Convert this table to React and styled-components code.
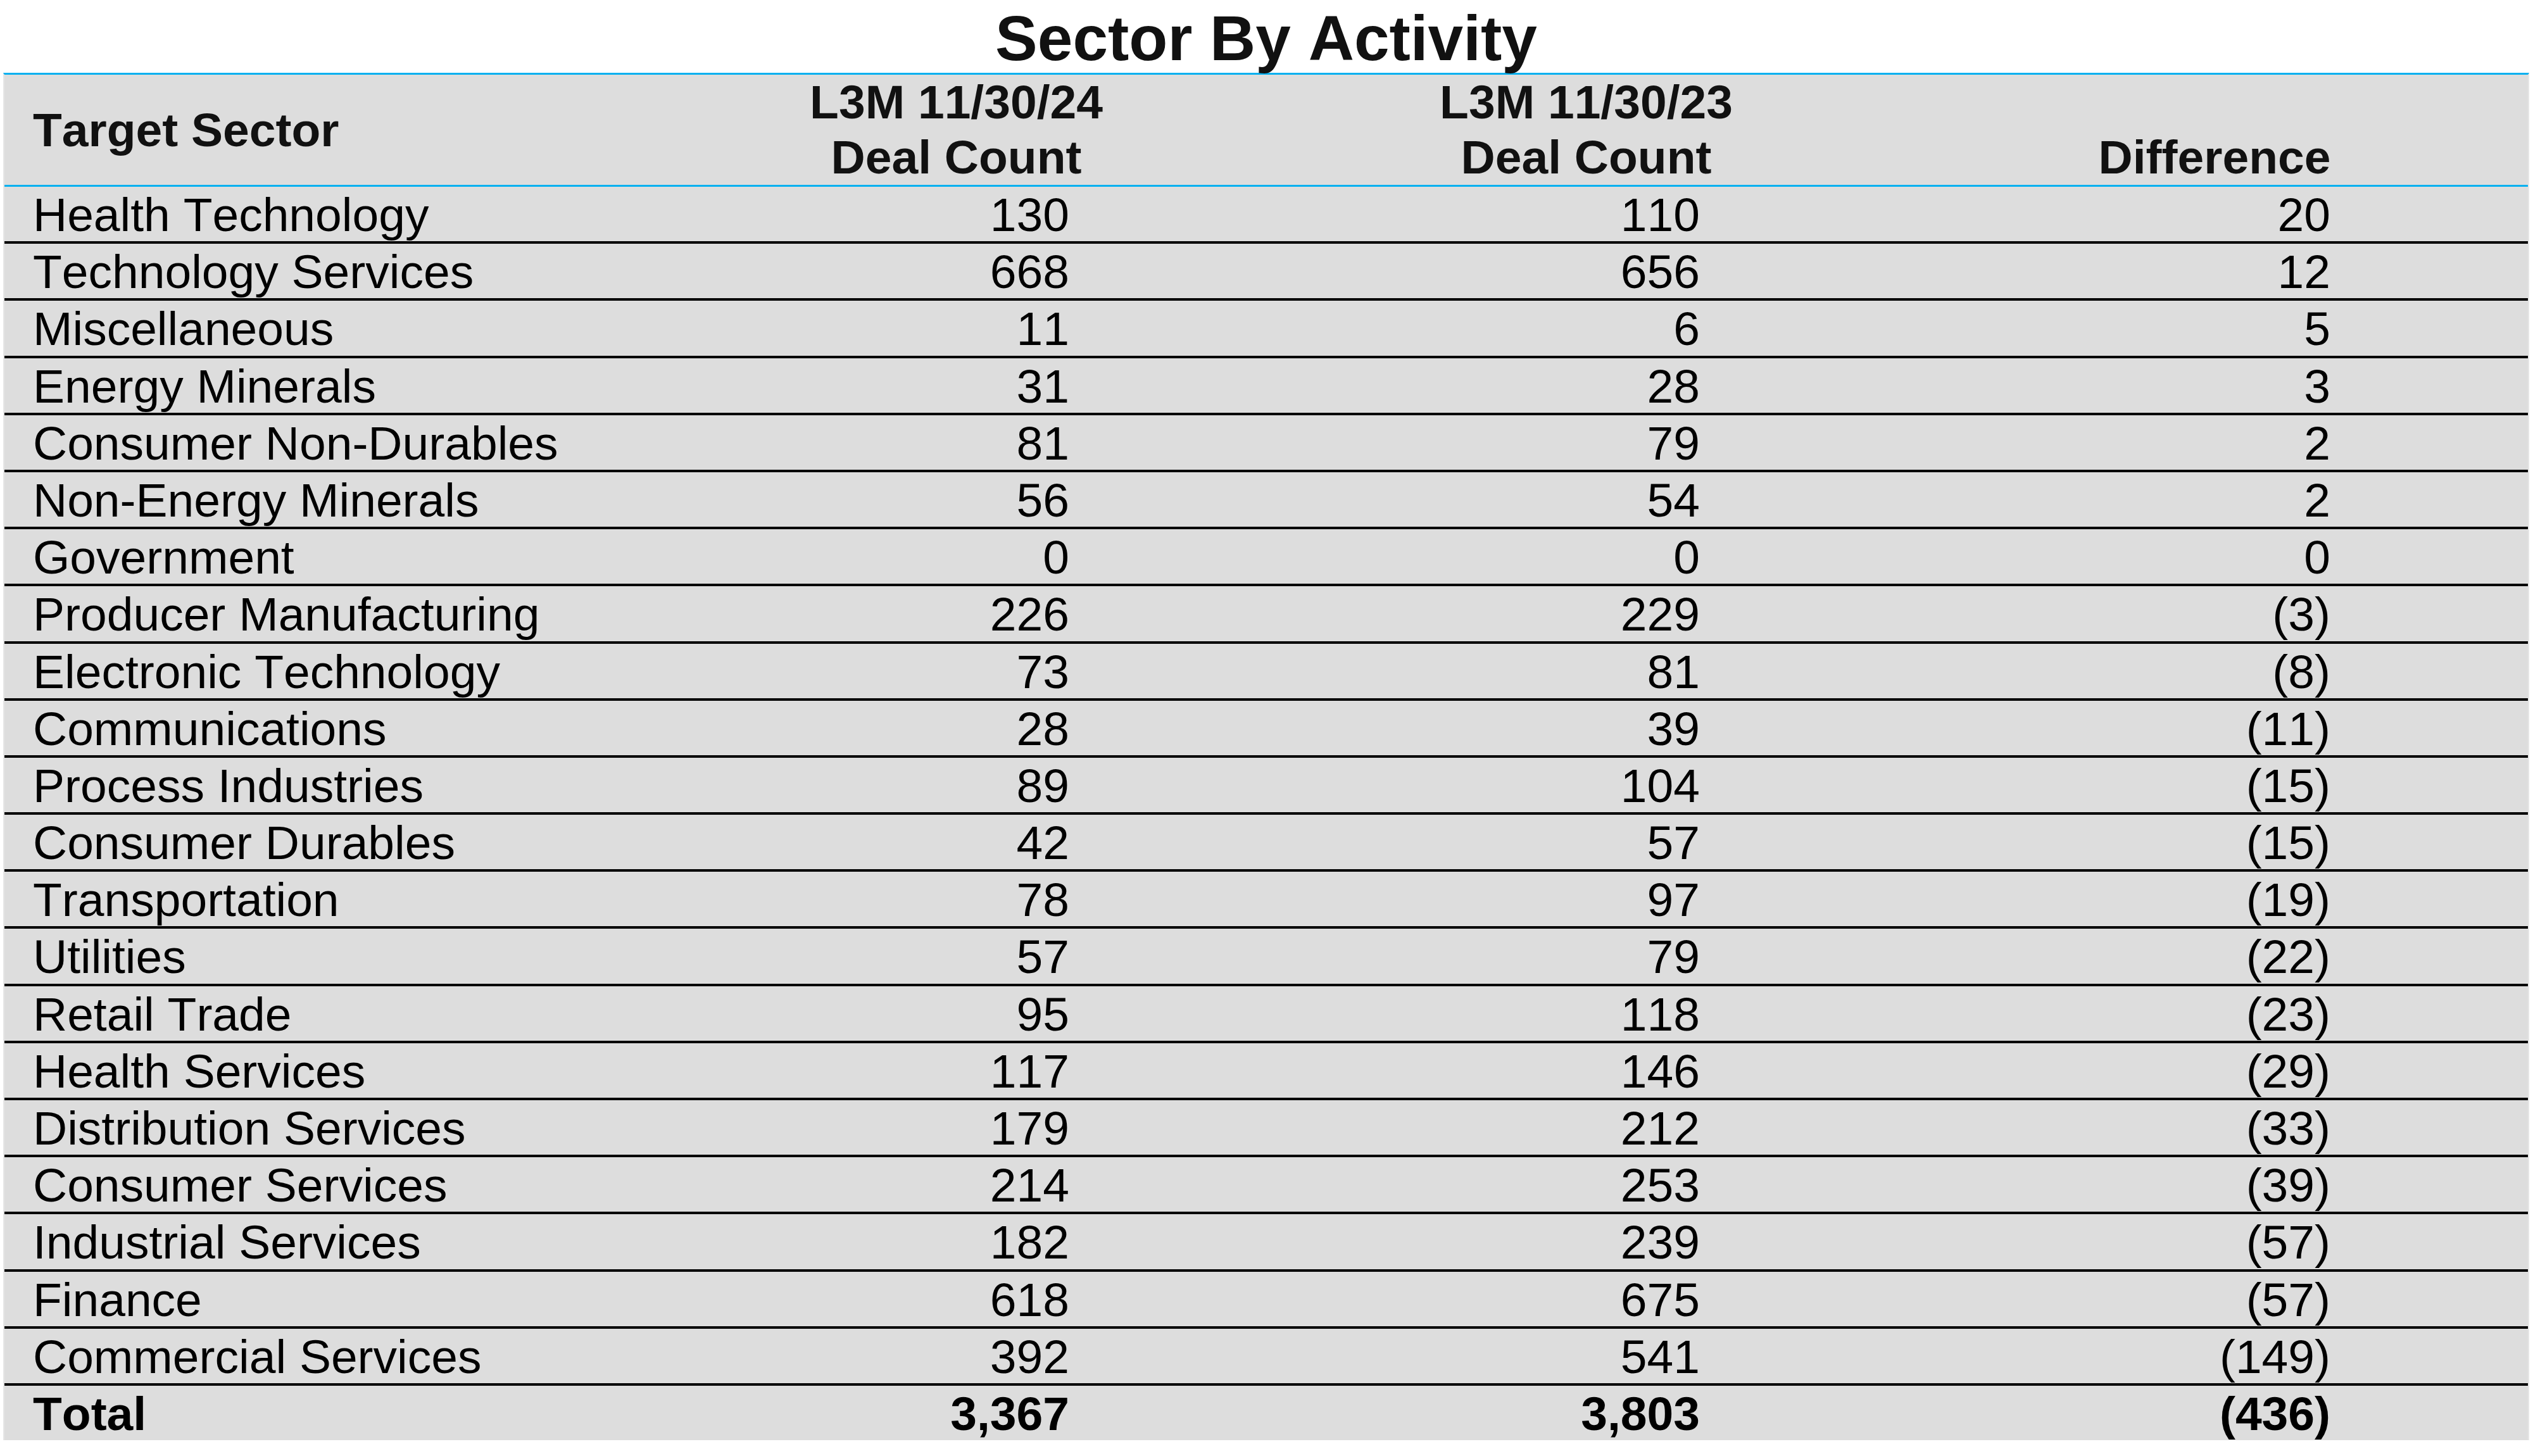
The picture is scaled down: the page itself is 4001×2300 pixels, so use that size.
import React from "react";
import styled, { createGlobalStyle } from "styled-components";

const GlobalStyle = createGlobalStyle`
  body {
    margin: 0;
    background: #ffffff;
    font-family: "Liberation Sans", Arial, sans-serif;
    font-kerning: none;
  }
`;

const BLUE = "#00b0f0";
const COLS = "1006px 995px 995px 990px";
const PADS = [319, 318, 312];

const Page = styled.div`
  width: 3990px;
  padding-left: 5px;
`;

const Title = styled.h1`
  margin: 0;
  padding-top: 5px;
  height: 110px;
  line-height: 110px;
  font-size: 100px;
  font-weight: bold;
  color: #111;
  text-align: center;
`;

const Table = styled.div`
  background: #dddddd;
  border-top: 3px solid ${BLUE};
  border-left: 2px solid #e6e6e6;
  border-right: 2px solid #e6e6e6;
`;

const HeadRow = styled.div`
  display: grid;
  grid-template-columns: ${COLS};
  height: 174px;
  border-bottom: 3px solid ${BLUE};
`;

const HeadCell = styled.div`
  display: flex;
  flex-direction: column;
  justify-content: ${(p) => (p.$bottom ? "flex-end" : "center")};
  align-items: ${(p) => (p.$left ? "flex-start" : "center")};
  padding-left: ${(p) => (p.$left ? "45px" : "0")};
  font-size: 75px;
  line-height: 87px;
  font-weight: bold;
  color: #111;
  white-space: nowrap;
`;

const Row = styled.div`
  display: grid;
  grid-template-columns: ${COLS};
  height: ${(p) => (p.$last ? "85.8px" : "90.2px")};
  box-sizing: border-box;
  border-bottom: ${(p) => (p.$last ? "none" : "4px solid #000")};
  font-weight: ${(p) => (p.$bold ? "bold" : "normal")};
`;

const Cell = styled.div`
  box-sizing: border-box;
  padding-top: 2px;
  padding-left: ${(p) => (p.$num ? "0" : "45px")};
  padding-right: ${(p) => (p.$num ? `${p.$pad}px` : "0")};
  text-align: ${(p) => (p.$num ? "right" : "left")};
  font-size: 75px;
  line-height: 84.2px;
  color: #000;
  white-space: nowrap;
`;

const rows = [
  ["Health Technology", "130", "110", "20"],
  ["Technology Services", "668", "656", "12"],
  ["Miscellaneous", "11", "6", "5"],
  ["Energy Minerals", "31", "28", "3"],
  ["Consumer Non-Durables", "81", "79", "2"],
  ["Non-Energy Minerals", "56", "54", "2"],
  ["Government", "0", "0", "0"],
  ["Producer Manufacturing", "226", "229", "(3)"],
  ["Electronic Technology", "73", "81", "(8)"],
  ["Communications", "28", "39", "(11)"],
  ["Process Industries", "89", "104", "(15)"],
  ["Consumer Durables", "42", "57", "(15)"],
  ["Transportation", "78", "97", "(19)"],
  ["Utilities", "57", "79", "(22)"],
  ["Retail Trade", "95", "118", "(23)"],
  ["Health Services", "117", "146", "(29)"],
  ["Distribution Services", "179", "212", "(33)"],
  ["Consumer Services", "214", "253", "(39)"],
  ["Industrial Services", "182", "239", "(57)"],
  ["Finance", "618", "675", "(57)"],
  ["Commercial Services", "392", "541", "(149)"],
];

const total = ["Total", "3,367", "3,803", "(436)"];

function DataRow({ values, bold, last }) {
  const [name, ...nums] = values;
  return (
    <Row $bold={bold} $last={last}>
      <Cell>{name}</Cell>
      {nums.map((n, i) => (
        <Cell key={i} $num $pad={PADS[i]}>
          {n}
        </Cell>
      ))}
    </Row>
  );
}

export default function App() {
  return (
    <Page>
      <GlobalStyle />
      <Title>Sector By Activity</Title>
      <Table>
        <HeadRow>
          <HeadCell $left>Target Sector</HeadCell>
          <HeadCell>
            <span>L3M 11/30/24</span>
            <span>Deal Count</span>
          </HeadCell>
          <HeadCell>
            <span>L3M 11/30/23</span>
            <span>Deal Count</span>
          </HeadCell>
          <HeadCell $bottom>Difference</HeadCell>
        </HeadRow>
        {rows.map((r) => (
          <DataRow key={r[0]} values={r} />
        ))}
        <DataRow values={total} bold last />
      </Table>
    </Page>
  );
}
